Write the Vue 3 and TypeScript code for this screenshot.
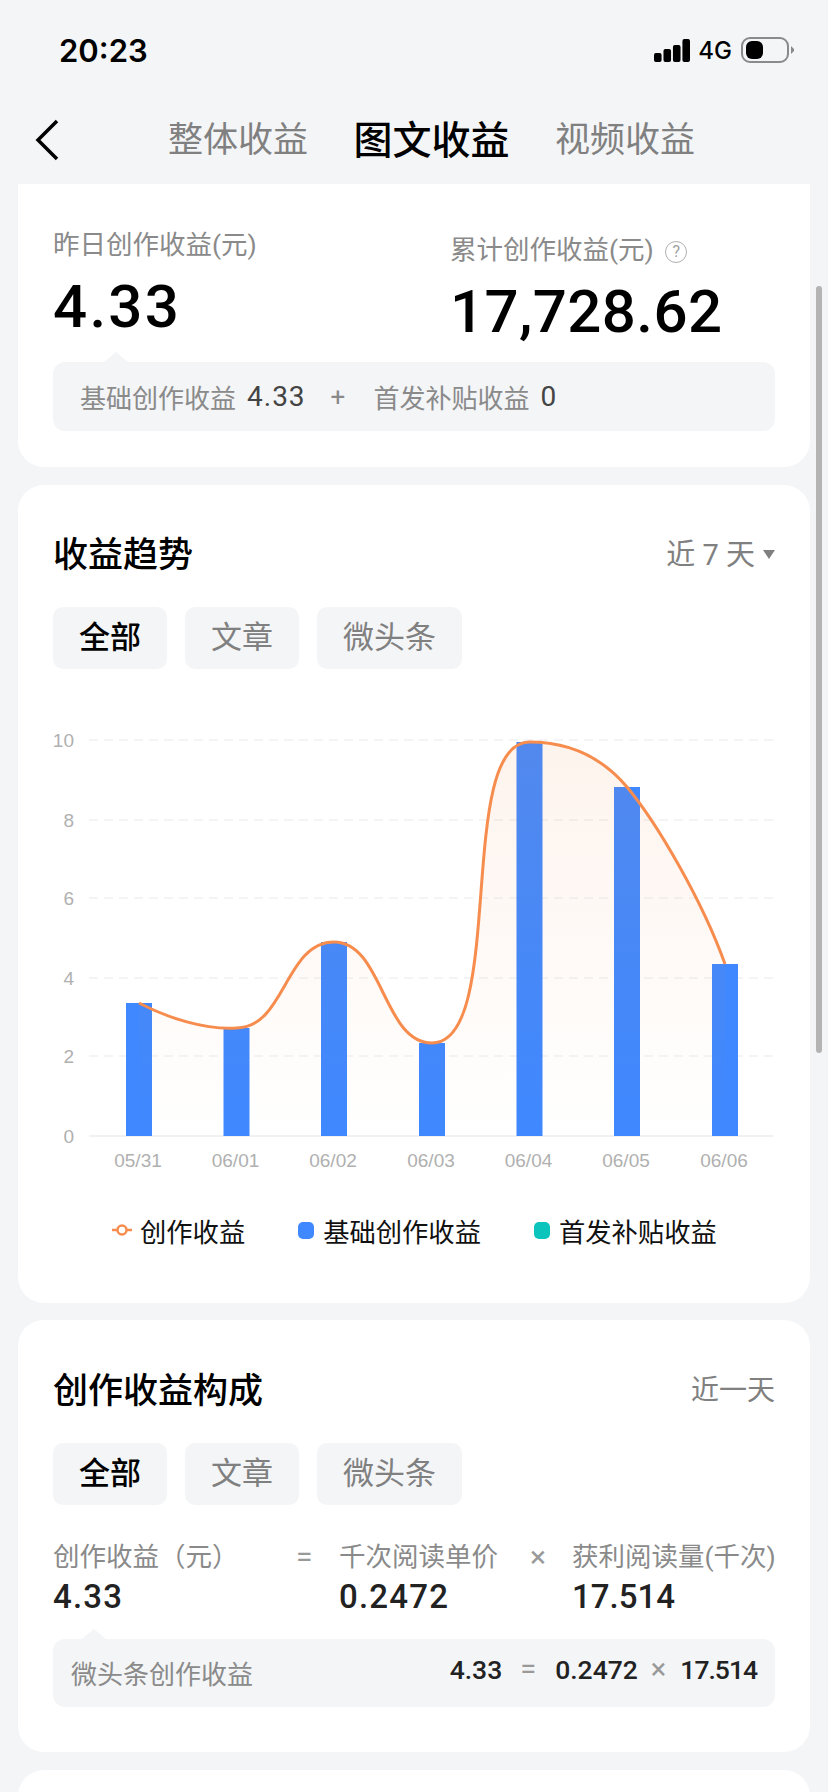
<script setup lang="ts">
const tabs = ['整体收益', '图文收益', '视频收益']
const pills = ['全部', '文章', '微头条']

const baseY = 1136
const barWidth = 26
const bars = [
  { date: '05/31', x: 139, top: 1003 },
  { date: '06/01', x: 236.5, top: 1028 },
  { date: '06/02', x: 334, top: 942 },
  { date: '06/03', x: 432, top: 1043 },
  { date: '06/04', x: 529.5, top: 742 },
  { date: '06/05', x: 627, top: 787 },
  { date: '06/06', x: 725, top: 964 }
]
const yTicks = [
  { label: '10', y: 740 },
  { label: '8', y: 820 },
  { label: '6', y: 898 },
  { label: '4', y: 978 },
  { label: '2', y: 1056 }
]

// hand-fitted beziers through the bar tops
const curve =
  'M139 1003 C168 1018 205 1030 236.5 1028 C285 1028 285 942 334 942 ' +
  'C383 942 383 1043 432 1043 C507 1043 455 742 529.5 742 ' +
  'C565 742 600 755 627 787 C657 823 702 900 725 964'
const area = `${curve} L725 ${baseY} L139 ${baseY} Z`
</script>

<template>
  <div class="page">
    <div class="status">
      <span class="time">20:23</span>
      <div class="status-right">
        <svg width="36" height="24" viewBox="0 0 38 24" preserveAspectRatio="none">
          <rect x="0" y="15" width="8" height="9" rx="2" />
          <rect x="10" y="11" width="8" height="13" rx="2" />
          <rect x="20" y="7" width="8" height="17" rx="2" />
          <rect x="30" y="1" width="8" height="23" rx="2" />
        </svg>
        <span class="net">4G</span>
        <svg width="53" height="26" viewBox="0 0 53 26">
          <rect x="1" y="1" width="46" height="24" rx="8" fill="none" stroke="#8a8a8a" stroke-width="2" />
          <rect x="5" y="4" width="17" height="18" rx="6" />
          <path d="M50 9 L53 12 V14 L50 17 Z" fill="#8a8a8a" />
        </svg>
      </div>
    </div>

    <div class="nav">
      <svg class="back" width="24" height="42" viewBox="0 0 24 42">
        <path d="M22 2 L3 21 L22 40" fill="none" stroke="#000" stroke-width="3.5" />
      </svg>
      <div class="tabs">
        <span v-for="(t, i) in tabs" :key="t" class="tab" :class="{ on: i === 1 }">{{ t }}</span>
      </div>
    </div>

    <section class="card summary">
      <div class="stats">
        <div>
          <div class="label">昨日创作收益(元)</div>
          <div class="big left">4.33</div>
        </div>
        <div class="stat-right">
          <div class="label">
            累计创作收益(元)
            <span class="help">?</span>
          </div>
          <div class="big">17,728.62</div>
        </div>
      </div>
      <div class="box box-sum">
        <span>基础创作收益</span>
        <span class="num">4.33</span>
        <span class="plus">+</span>
        <span>首发补贴收益</span>
        <span class="num">0</span>
      </div>
    </section>

    <section class="card trend">
      <div class="head">
        <h2>收益趋势</h2>
        <div class="range wide">近 7 天<i class="caret"></i></div>
      </div>
      <div class="pills">
        <span v-for="(p, i) in pills" :key="p" class="pill" :class="{ on: i === 0 }">{{ p }}</span>
      </div>

      <svg class="chart" width="722" height="450" viewBox="53 725 722 450">
        <defs>
          <linearGradient id="fade" x1="0" y1="0" x2="0" y2="1">
            <stop offset="0" stop-color="#f68d4e" stop-opacity="0.1" />
            <stop offset="1" stop-color="#f68d4e" stop-opacity="0" />
          </linearGradient>
        </defs>
        <g v-for="t in yTicks" :key="t.label">
          <line x1="89" x2="773" :y1="t.y" :y2="t.y" stroke="#f1f1f3" stroke-width="1.5" stroke-dasharray="9 6" />
          <text x="74" :y="t.y + 7" text-anchor="end" class="axis">{{ t.label }}</text>
        </g>
        <text x="74" y="1143" text-anchor="end" class="axis">0</text>
        <line x1="89" x2="773" y1="1136" y2="1136" stroke="#f0f1f3" stroke-width="2" />
        <g v-for="b in bars" :key="b.date">
          <rect :x="b.x - barWidth / 2" :y="b.top" :width="barWidth" :height="baseY - b.top" fill="#3f88ff" />
          <text :x="b.x - 1" y="1167" text-anchor="middle" class="axis">{{ b.date }}</text>
        </g>
        <path :d="area" fill="url(#fade)" />
        <path :d="curve" fill="none" stroke="#f68d4e" stroke-width="3" />
      </svg>

      <div class="legend">
        <div class="leg leg-line">
          <svg width="20" height="14" viewBox="0 0 20 14">
            <path d="M0 7 H20" stroke="#f68d4e" stroke-width="2.5" />
            <circle cx="10" cy="7" r="4.5" fill="#fff" stroke="#f68d4e" stroke-width="2.5" />
          </svg>
          创作收益
        </div>
        <div class="leg"><i class="dot blue"></i>基础创作收益</div>
        <div class="leg"><i class="dot teal"></i>首发补贴收益</div>
      </div>
    </section>

    <section class="card parts">
      <div class="head">
        <h2>创作收益构成</h2>
        <div class="range">近一天</div>
      </div>
      <div class="pills">
        <span v-for="(p, i) in pills" :key="p" class="pill" :class="{ on: i === 0 }">{{ p }}</span>
      </div>
      <div class="formula">
        <span class="label">创作收益（元）</span>
        <span class="sign">=</span>
        <span class="label">千次阅读单价</span>
        <span class="sign">×</span>
        <span class="label">获利阅读量(千次)</span>
        <b class="val">4.33</b>
        <span></span>
        <b class="val">0.2472</b>
        <span></span>
        <b class="val narrow">17.514</b>
      </div>
      <div class="box box-parts">
        <span class="label">微头条创作收益</span>
        <div class="calc">
          <span>4.33</span>
          <em class="eq">=</em>
          <span>0.2472</span>
          <em class="times">×</em>
          <span class="tight">17.514</span>
        </div>
      </div>
    </section>

    <section class="card last"></section>

    <div class="scrollbar"></div>
  </div>
</template>

<style scoped>
.page {
  position: relative;
  width: 828px;
  height: 1792px;
  overflow: hidden;
  background: #f4f5f7;
  font-family: Roboto, "Noto Sans CJK SC", sans-serif;
  color: #000;
}

.status {
  height: 100px;
  display: flex;
  align-items: center;
  justify-content: space-between;
  padding: 0 34px 0 59px;
}
.time {
  font-family: Inter, sans-serif;
  font-size: 31px;
  font-weight: 600;
}
.status-right {
  display: flex;
  align-items: center;
}
.net {
  font-family: Inter, sans-serif;
  font-size: 24px;
  font-weight: 500;
  margin: 0 9px 0 8px;
}

.nav {
  box-sizing: border-box;
  height: 84px;
  display: flex;
  align-items: center;
  padding: 0 0 2px 35px;
}
.back {
  flex: none;
  margin-bottom: 2px;
}
.tabs {
  display: flex;
  align-items: center;
  gap: 45.5px;
  margin-left: 109px;
}
.tab {
  font-size: 35px;
  color: #808080;
  line-height: 48px;
}
.tab.on {
  font-size: 39px;
  font-weight: 500;
  color: #000;
}

.card {
  margin: 0 18px 18px;
  padding: 0 35px;
  background: #fff;
  border-radius: 26px;
}

.summary {
  border-radius: 0 0 26px 26px;
  padding-top: 43px;
  padding-bottom: 36px;
}
.stats {
  display: grid;
  grid-template-columns: 397px 1fr;
  margin-bottom: 15px;
}
.stat-right {
  padding-top: 5px;
}
.label {
  font-size: 26.5px;
  line-height: 36px;
  color: #8a8a8a;
  white-space: nowrap;
}
.help {
  display: inline-flex;
  align-items: center;
  justify-content: center;
  width: 20px;
  height: 20px;
  margin-left: 5px;
  border: 1.5px solid #b0b0b0;
  border-radius: 50%;
  font-size: 16px;
  line-height: 1;
  color: #a0a0a0;
  vertical-align: 2px;
}
.big {
  margin-top: 9px;
  font-size: 60px;
  line-height: 70px;
  font-weight: 500;
  letter-spacing: 0.4px;
}
.big.left {
  letter-spacing: 2.3px;
}

.box {
  position: relative;
  background: #f4f5f7;
  border-radius: 12px;
}
.box::before {
  content: "";
  position: absolute;
  top: -10px;
  border-left: 12px solid transparent;
  border-right: 12px solid transparent;
  border-bottom: 10px solid #f4f5f7;
}
.box-sum {
  height: 69px;
  display: flex;
  align-items: center;
  padding-left: 27px;
  font-size: 26px;
  color: #8a8a8a;
}
.box-sum::before {
  left: 51px;
}
.num {
  margin-left: 11px;
  font-size: 28px;
  letter-spacing: 1px;
  color: #444;
}
.plus {
  margin: 0 28px 0 25px;
}

.trend {
  padding-top: 45px;
  padding-bottom: 51px;
  margin-bottom: 17px;
}
.head {
  display: flex;
  align-items: center;
  justify-content: space-between;
  height: 48px;
}
h2 {
  margin: 0;
  padding-top: 4px;
  font-size: 35px;
  font-weight: 500;
  line-height: 48px;
}
.range {
  display: flex;
  align-items: center;
  padding-bottom: 4px;
  font-size: 28px;
  color: #808080;
}
.range.wide {
  font-size: 29px;
}
.caret {
  width: 0;
  height: 0;
  margin-left: 8px;
  margin-top: 5px;
  border-left: 6px solid transparent;
  border-right: 6px solid transparent;
  border-top: 9px solid #808080;
}
.pills {
  display: flex;
  gap: 18px;
  margin-top: 29px;
}
.pill {
  box-sizing: border-box;
  height: 62px;
  padding: 0 26px 7px;
  display: flex;
  align-items: center;
  background: #f4f5f7;
  border-radius: 10px;
  font-size: 31px;
  color: #808080;
}
.pill.on {
  color: #000;
  font-weight: 500;
}

.chart {
  display: block;
  margin-top: 56px;
}
.axis {
  font-family: "Liberation Sans", sans-serif;
  font-size: 19px;
  fill: #b0b0b0;
}

.legend {
  box-sizing: border-box;
  height: 40px;
  margin-top: 37px;
  padding: 0 0 4px 59px;
  display: flex;
  align-items: center;
  font-size: 26.3px;
  color: #111;
}
.leg {
  display: flex;
  align-items: center;
  white-space: nowrap;
  margin-right: 53px;
}
.leg:nth-child(2) {
  margin-right: 53px;
}
.leg-line svg {
  margin-right: 8px;
}
.dot {
  width: 16px;
  height: 17px;
  margin-right: 9px;
  border-radius: 5px;
}
.blue {
  background: #3f88ff;
}
.teal {
  background: #0bc4bb;
}

.parts {
  padding-top: 46px;
  padding-bottom: 45px;
}
.formula {
  display: grid;
  grid-template-columns: 243px 43px 191px 42px 1fr;
  margin-top: 34px;
}
.sign {
  font-size: 30px;
  line-height: 36px;
  color: #999;
}
.val {
  font-size: 33px;
  line-height: 44px;
  font-weight: 500;
  letter-spacing: 1.2px;
  color: #222;
}
.val.narrow {
  letter-spacing: 0;
}
.box-parts {
  height: 68px;
  margin-top: 20px;
  display: flex;
  align-items: center;
  justify-content: space-between;
  padding: 0 18px;
}
.box-parts::before {
  left: 29px;
}
.box-parts .label {
  padding-top: 4px;
  font-size: 26px;
}
.calc {
  display: flex;
  align-items: center;
  gap: 16px;
  margin-top: -7px;
  font-size: 26.5px;
  font-weight: 500;
  color: #222;
}
.calc em {
  font-style: normal;
  font-weight: 400;
  font-size: 29px;
  line-height: 1;
  color: #999;
}
.calc .eq {
  margin: 0 3px 0 2px;
}
.calc .times {
  margin: 0 -2px 0 -3px;
}
.tight {
  letter-spacing: -1px;
}

.last {
  height: 80px;
}

.scrollbar {
  position: absolute;
  top: 286px;
  right: 6px;
  width: 6px;
  height: 767px;
  border-radius: 3px;
  background: #b4b4b4;
}
</style>
